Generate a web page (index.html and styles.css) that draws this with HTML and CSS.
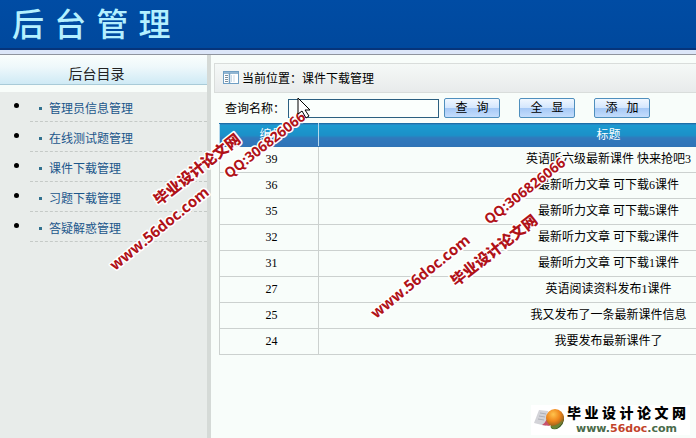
FILE: index.html
```html
<!DOCTYPE html>
<html lang="zh-CN">
<head>
    <meta charset="UTF-8">
    <meta name="viewport" content="width=device-width, initial-scale=1.0">
    <title>后台管理</title>
    <link rel="stylesheet" href="styles.css">
</head>
<body>
    <header class="top">
        <h1>后 台 管 理</h1>
    </header>
    <div class="layout">
        <!-- Left menu -->
        <nav class="sidebar">
            <h2>后台目录</h2>
            <ul class="menu">
                <li><a href="#">管理员信息管理</a></li>
                <li><a href="#">在线测试题管理</a></li>
                <li><a href="#">课件下载管理</a></li>
                <li><a href="#">习题下载管理</a></li>
                <li><a href="#">答疑解惑管理</a></li>
            </ul>
        </nav>
        <!-- Content -->
        <main class="content">
            <div class="location">
                <svg width="16" height="14" viewBox="0 0 16 14">
                    <rect x="0.5" y="0.5" width="15" height="12" fill="#fff" stroke="#6f9fc4"/>
                    <path d="M1 2h14M6.500 2v10" stroke="#6f9fc4" stroke-width="1.500"/>
                    <path d="M2 4.500h3M2 6.500h3M2 8.500h3M2 10.500h3" stroke="#7d8f9c"/>
                    <path d="M8.500 4v7M11 4v7" stroke="#c9dbe8"/>
                </svg>
                <span>当前位置：课件下载管理</span>
            </div>
            <form class="search">
                <label for="keyword">查询名称：</label>
                <input type="text" id="keyword" name="keyword">
                <div class="buttons">
                    <button type="button">查&nbsp;&nbsp;&nbsp;询</button>
                    <button type="button">全&nbsp;&nbsp;&nbsp;显</button>
                    <button type="button">添&nbsp;&nbsp;&nbsp;加</button>
                </div>
            </form>
            <table class="list">
                <thead>
                    <tr><th class="num">编号</th><th>标题</th></tr>
                </thead>
                <tbody>
                    <tr><td class="num">39</td><td>英语听六级最新课件 快来抢吧3</td></tr>
                    <tr><td class="num">36</td><td>最新听力文章 可下载6课件</td></tr>
                    <tr><td class="num">35</td><td>最新听力文章 可下载5课件</td></tr>
                    <tr><td class="num">32</td><td>最新听力文章 可下载2课件</td></tr>
                    <tr><td class="num">31</td><td>最新听力文章 可下载1课件</td></tr>
                    <tr><td class="num">27</td><td>英语阅读资料发布1课件</td></tr>
                    <tr><td class="num">25</td><td>我又发布了一条最新课件信息</td></tr>
                    <tr><td class="num">24</td><td>我要发布最新课件了</td></tr>
                </tbody>
            </table>
        </main>
    </div>

    <!-- Watermarks -->
    <svg class="overlay" width="696" height="438">
        <g class="mark">
            <text class="cn" transform="translate(159 206) rotate(-38)">毕业设计论文网</text>
            <text class="site" transform="translate(115 271) rotate(-39)">www.56doc.com</text>
            <text class="qq" transform="translate(229 179) rotate(-38)">QQ:306826066</text>
            <text class="cn" transform="translate(456 287) rotate(-38)">毕业设计论文网</text>
            <text class="site" transform="translate(376 319) rotate(-39)">www.56doc.com</text>
            <text class="qq" transform="translate(489 225) rotate(-38)">QQ:306826066</text>
        </g>
        <path d="M298 98v16l4-3 4 7 3-2-4-6h5z" fill="#fff" stroke="#000"/>
    </svg>

    <div class="logo">
        <svg width="36" height="26" viewBox="0 0 36 26">
            <defs>
                <radialGradient id="globe" cx="0.4" cy="0.3" r="0.75">
                    <stop offset="0" stop-color="#ffc44d"/>
                    <stop offset="0.5" stop-color="#ef861c"/>
                    <stop offset="1" stop-color="#81551c"/>
                </radialGradient>
            </defs>
            <path d="M8 5l9 1-2 15-12-3z" fill="#d3d3d8"/>
            <path d="M9 8l6 1M8 11l6 1M7 14l6 1" stroke="#aeb0b8"/>
            <path d="M11 20q3-2 5-6l3 7z" fill="#c9526c"/>
            <path d="M20 20l8-4 5-5q1 9-7 13-8 1-6-4z" fill="#315c24"/>
            <ellipse cx="24" cy="13" rx="9" ry="9" fill="url(#globe)"/>
            <path d="M20 21q8 0 12-7-2 8-8 10-4 0-4-3z" fill="#6b8437"/>
        </svg>
        <div class="logo-text">
            <strong>毕 业 设 计 论 文 网</strong>
            <a href="#">www.<em>56doc</em>.com</a>
        </div>
    </div>
</body>
</html>
```
FILE: styles.css
```css
* {
    box-sizing: border-box;
}
body {
    margin: 0;
    min-height: 100vh;
    display: flex;
    flex-direction: column;
    overflow: hidden;
    background: #f8fdfa;
    color: #000;
    font-family: "Liberation Serif", "Noto Sans CJK SC", serif;
    font-size: 12px;
}
.top {
    height: 55px;
    padding-left: 12px;
    background: linear-gradient(#004ca4, #00489c);
    border-bottom: 1px solid #8f949e;
    box-shadow: inset 0 -4px #dce6f8, inset 0 -6px #06347a;
}
.top h1 {
    margin: 0;
    color: #b4f0ff;
    font-family: "DejaVu Sans", "Noto Sans CJK SC", sans-serif;
    font-size: 32px;
    font-weight: 500;
    line-height: 50px;
}
.layout {
    flex: 1;
    display: flex;
}
.sidebar {
    flex: 0 0 211px;
    background: #e8ecea;
    border-right: 4px solid #d5dad7;
}
.sidebar h2 {
    margin: 0;
    height: 37px;
    padding-right: 14px;
    background: linear-gradient(#fafefd, #eef8fb 12px, #cfeaf5 29px, #a9cbd8 29px, #a9cbd8 30px, #f8fdfa 30px);
    color: #222;
    font-size: 14px;
    font-weight: normal;
    line-height: 40px;
    text-align: center;
}
.menu {
    margin: 0;
    padding-left: 30px;
    font-size: 16px;
}
.menu li {
    height: 30px;
    line-height: 26px;
    border-bottom: 1px dashed #c5cac7;
}
.menu a {
    display: flex;
    align-items: center;
    gap: 7px;
    padding-left: 9px;
    color: #1b568a;
    font-size: 12px;
    line-height: 22px;
    text-decoration: none;
}
.menu a::before {
    content: "";
    width: 3px;
    height: 3px;
    background: #31718f;
}
.content {
    flex: 1;
    min-width: 0;
    padding: 8px 0 0 3px;
    overflow: hidden;
}
.location {
    display: flex;
    align-items: center;
    gap: 3px;
    height: 30px;
    padding-left: 8px;
    border: 1px solid #d9dddb;
    border-right: 0;
    background: linear-gradient(#f5f9f7, #e8ebeb);
}
.search {
    display: flex;
    align-items: center;
    margin: 5px 0;
    padding-left: 11px;
}
.search label {
    width: 63px;
}
.search input {
    width: 151px;
    height: 19px;
    border: 1px solid #2b5f80;
    background: #fbfffd;
}
.buttons {
    display: flex;
    gap: 19px;
    margin-left: 5px;
}
.buttons button {
    width: 56px;
    height: 20px;
    padding: 0;
    border: 1px solid #4f8fbd;
    border-radius: 2px;
    background: linear-gradient(#f0f7ff, #d3e6fd 50%, #a5c8f6 50%, #c4ddfc);
    color: #000;
    font: inherit;
    line-height: 16px;
}
.list {
    width: 680px;
    margin-left: 5px;
    border-collapse: collapse;
    table-layout: fixed;
    line-height: 16px;
}
.list th,
.list td {
    height: 26px;
    padding: 0 0 2px;
    border: 1px solid #ccd1cf;
    font-weight: normal;
    text-align: center;
}
.list th {
    height: 23px;
    padding-bottom: 0;
    border-color: #1b6fa8 #b5d9ed #2f74b5;
    background: linear-gradient(#1b9bd0, #1b90c8 50%, #3079bc 60%, #3074b8);
    color: #fff;
}
.list .num {
    width: 99px;
    padding-left: 5px;
}
.overlay {
    position: absolute;
    top: 0;
    left: 0;
    pointer-events: none;
}
.mark {
    fill: #b01218;
    stroke: #fff;
    stroke-width: 3px;
    stroke-linejoin: round;
    paint-order: stroke;
    font-family: "Open Sans", "Noto Sans CJK SC", sans-serif;
    font-weight: bold;
}
.cn {
    font-size: 15px;
    font-weight: 900;
}
.site {
    font-size: 15px;
}
.qq {
    font-size: 14px;
}
.logo {
    position: absolute;
    right: 6px;
    bottom: 3px;
    display: flex;
    padding-right: 4px;
    background: #fff;
}
.logo-text {
    display: flex;
    flex-direction: column;
    align-items: center;
}
.logo strong {
    font-size: 14px;
    font-weight: 900;
    line-height: 17px;
}
.logo a {
    color: #4a6b4a;
    font-family: "DejaVu Sans", sans-serif;
    font-size: 11px;
    font-weight: bold;
    line-height: 13px;
    text-decoration: none;
}
.logo em {
    color: #c2432a;
    font-style: normal;
}
```
